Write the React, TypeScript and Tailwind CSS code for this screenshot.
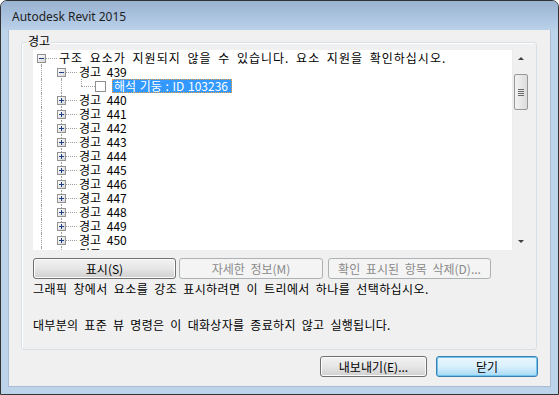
import React from 'react';

type Row = {
  level: number;
  guides: boolean[];
  text: string;
  kind: 'minus' | 'plus' | 'leaf';
  top: boolean;
  bottom: boolean;
};

const rows: Row[] = [
  { level: 0, guides: [], text: '구조 요소가 지원되지 않을 수 있습니다. 요소 지원을 확인하십시오.', kind: 'minus', top: false, bottom: true },
  { level: 1, guides: [true], text: '경고 439', kind: 'minus', top: false, bottom: true },
  { level: 2, guides: [true, true], text: '해석 기둥 : ID 103236', kind: 'leaf', top: true, bottom: false },
  ...Array.from({ length: 12 }).map((_, i) => ({
    level: 1,
    guides: [true],
    text: `경고 ${440 + i}`,
    kind: 'plus' as const,
    top: true,
    bottom: true,
  })),
];

const Expander = ({ open }: { open: boolean }) => (
  <div className="absolute left-[4px] top-[3px] w-[9px] h-[9px] border border-[#929292] bg-gradient-to-br from-white to-[#d6d6d6] flex items-center justify-center">
    <div className="relative w-[5px] h-[5px]">
      <div className="absolute left-0 right-0 top-[2px] h-px bg-[#1e3f86]" />
      {!open && <div className="absolute top-0 bottom-0 left-[2px] w-px bg-[#1e3f86]" />}
    </div>
  </div>
);

const TreeRow = ({ row }: { row: Row }) => (
  <div className="flex h-[14px] items-center">
    {row.guides.map((g, i) => (
      <div key={i} className="relative w-5 h-[14px] shrink-0">
        {g && <div className="absolute left-[8px] top-0 bottom-0 border-l border-dotted border-[#a0a0a0]" />}
      </div>
    ))}
    <div className="relative w-5 h-[14px] shrink-0">
      {row.top && <div className="absolute left-[8px] top-0 h-[7px] border-l border-dotted border-[#a0a0a0]" />}
      {row.bottom && <div className="absolute left-[8px] top-[7px] bottom-0 border-l border-dotted border-[#a0a0a0]" />}
      <div className={`absolute left-[8px] top-[7px] border-t border-dotted border-[#a0a0a0] ${row.kind === 'leaf' ? 'right-[-2px]' : 'right-[-4px]'}`} />
      {row.kind !== 'leaf' && <Expander open={row.kind === 'minus'} />}
    </div>
    {row.kind === 'leaf' ? (
      <div className="flex items-center">
        <div className="ml-[2px] w-[11px] h-[11px] border border-[#8e8f8f] bg-white" />
        <div className="ml-[6px] h-[14px] w-[120px] border border-dotted border-[#f0a040] bg-[#3399ff] text-white leading-[12px] pl-[1px] whitespace-nowrap [word-spacing:1px]">
          {row.text}
        </div>
      </div>
    ) : (
      <span className={`ml-[6px] whitespace-nowrap leading-[14px] ${row.level === 0 ? 'tracking-[1px]' : ''}`}>{row.text}</span>
    )}
  </div>
);

const Scrollbar = () => (
  <div className="w-[16px] h-full bg-[#f0f0f0] border-l border-[#ececec] flex flex-col items-center">
    <div className="h-[17px] w-full flex items-center justify-center">
      <div className="w-0 h-0 border-l-[3px] border-r-[3px] border-b-[3px] border-l-transparent border-r-transparent border-b-[#404040]" />
    </div>
    <div className="mt-[7px] w-[14px] h-[36px] rounded-[2px] border border-[#979797] bg-gradient-to-r from-[#f3f3f3] to-[#dcdcdc] flex flex-col items-center justify-center gap-[1px]">
      <div className="w-[6px] h-px bg-[#6b6b6b]" />
      <div className="w-[6px] h-px bg-[#6b6b6b]" />
      <div className="w-[6px] h-px bg-[#6b6b6b]" />
      <div className="w-[6px] h-px bg-[#6b6b6b]" />
    </div>
    <div className="flex-1" />
    <div className="h-[17px] w-full flex items-center justify-center">
      <div className="w-0 h-0 border-l-[3px] border-r-[3px] border-t-[3px] border-l-transparent border-r-transparent border-t-[#404040]" />
    </div>
  </div>
);

const Button = ({ children, w, disabled, def }: { children: React.ReactNode; w: string; disabled?: boolean; def?: boolean }) => {
  const base = 'h-[21px] rounded-[3px] border flex items-center justify-center shrink-0';
  const look = disabled
    ? 'border-[#adb2b5] bg-[#f4f4f4] text-[#8a8a8a]'
    : def
    ? 'border-[#3c7fb1] bg-gradient-to-b from-[#eaf6fd] via-[#d9f0fc] to-[#a7d9f5] text-black shadow-[inset_0_0_0_1px_#6ec6ef]'
    : 'border-[#707070] bg-gradient-to-b from-[#f2f2f2] via-[#e6e6e6] to-[#cfcfcf] text-black shadow-[inset_0_0_0_1px_#fcfcfc]';
  return <div className={`${base} ${look} ${w}`}>{children}</div>;
};

export default function App() {
  return (
    <div className="w-[559px] h-[395px] bg-white font-['Noto_Sans_CJK_KR',sans-serif] text-[12px] text-black [word-spacing:3px]">
      <div className="w-[559px] h-[395px] border border-[#323232] rounded-t-[7px] bg-[#bdd3ea] flex flex-col overflow-hidden">
        <div className="h-[29px] shrink-0 bg-gradient-to-b from-[#98b2d1] to-[#bad1ea] flex items-center pl-[11px]">
          <span className="font-['Noto_Sans',sans-serif] text-[12px] text-[#1e1e1e] [word-spacing:0px] pt-[2px]">Autodesk Revit 2015</span>
        </div>
        <div className="flex-1 px-[7px] pb-[7px]">
          <div className="w-[543px] h-[357px] bg-[#f0f0f0] border-l border-r border-b border-[#a9bcd2] flex flex-col">
            <div className="relative ml-[12px] mt-[12px] w-[516px] h-[308px] rounded-[3px] border border-[#d5dfe5] shadow-[inset_1px_1px_0_#fff] pl-[11px] pt-[7px]">
              <div className="absolute left-[5px] top-[-10px] bg-[#f0f0f0] px-[1px] leading-[16px]">경고</div>
              <div className="w-[495px] h-[200px] bg-white flex overflow-hidden">
                <div className="flex-1 pt-[1px] overflow-hidden">
                  {rows.map((r, i) => (
                    <TreeRow key={i} row={r} />
                  ))}
                </div>
                <Scrollbar />
              </div>
              <div className="flex mt-[8px]">
                <Button w="w-[143px]">표시(S)</Button>
                <div className="w-[3px]" />
                <Button w="w-[144px]" disabled>자세한 정보(M)</Button>
                <div className="w-[5px]" />
                <Button w="w-[163px]" disabled>확인 표시된 항목 삭제(D)...</Button>
              </div>
              <div className="mt-[3px] leading-[14px] tracking-[0.4px]">그래픽 창에서 요소를 강조 표시하려면 이 트리에서 하나를 선택하십시오.</div>
              <div className="mt-[22px] leading-[14px] tracking-[0.3px]">대부분의 표준 뷰 명령은 이 대화상자를 종료하지 않고 실행됩니다.</div>
            </div>
            <div className="flex justify-end mt-[6px] pr-[12px] gap-[9px]">
              <Button w="w-[107px]">내보내기(E)...</Button>
              <Button w="w-[102px]" def>닫기</Button>
            </div>
          </div>
        </div>
      </div>
    </div>
  );
}
